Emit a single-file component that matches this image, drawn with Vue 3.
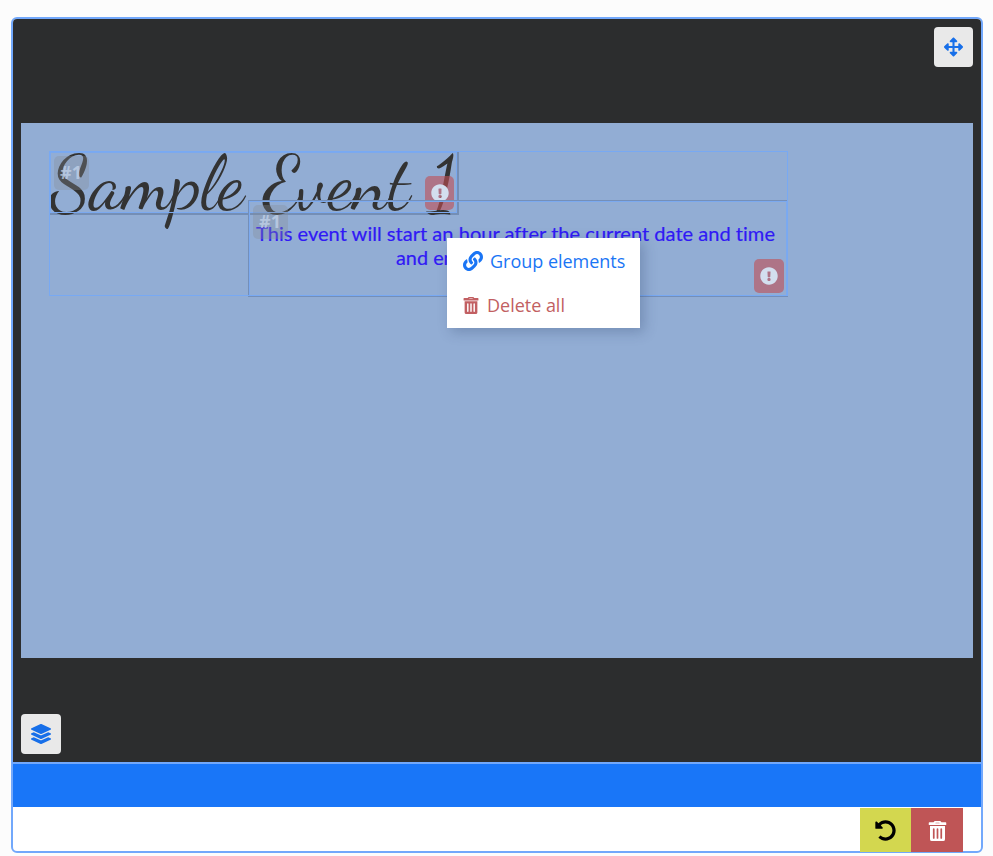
<script setup>
const icons = {
  move: { w: 512, d: 'M352.201 425.775l-79.196 79.196c-9.373 9.373-24.568 9.373-33.941 0l-79.196-79.196c-15.119-15.119-4.411-40.971 16.971-40.97h51.162L228 284H127.196v51.162c0 21.382-25.851 32.09-40.971 16.971L7.029 272.937c-9.373-9.373-9.373-24.569 0-33.941L86.225 159.8c15.119-15.119 40.971-4.411 40.971 16.971V228H228V127.196h-51.23c-21.382 0-32.09-25.851-16.971-40.971l79.196-79.196c9.373-9.373 24.568-9.373 33.941 0l79.196 79.196c15.119 15.119 4.411 40.971-16.971 40.971h-51.162V228h100.804v-51.162c0-21.382 25.851-32.09 40.97-16.971l79.196 79.196c9.373 9.373 9.373 24.569 0 33.941L425.773 352.2c-15.119 15.119-40.971 4.411-40.97-16.971V284H284v100.804h51.23c21.382 0 32.09 25.851 16.971 40.971z' },
  layers: { w: 512, d: 'M12.41 148.02l232.94 105.67c6.8 3.09 14.49 3.09 21.29 0l232.94-105.67c16.55-7.51 16.55-32.52 0-40.03L266.65 2.31a25.607 25.607 0 0 0-21.29 0L12.41 107.98c-16.55 7.51-16.55 32.53 0 40.04zm487.18 88.28l-58.09-26.33-161.64 73.27c-7.56 3.43-15.59 5.17-23.86 5.17s-16.29-1.74-23.86-5.17L70.51 209.97l-58.1 26.33c-16.55 7.5-16.55 32.5 0 40l232.94 105.59c6.8 3.08 14.49 3.08 21.29 0L499.59 276.3c16.55-7.5 16.55-32.5 0-40zm0 127.8l-57.87-26.23-161.86 73.37c-7.56 3.43-15.59 5.17-23.86 5.17s-16.29-1.74-23.86-5.17L70.29 337.87 12.41 364.1c-16.55 7.5-16.55 32.5 0 40l232.94 105.59c6.8 3.08 14.49 3.08 21.29 0L499.59 404.1c16.55-7.5 16.55-32.5 0-40z' },
  link: { w: 512, d: 'M326.612 185.391c59.747 59.809 58.927 155.698.36 214.59-.11.12-.24.25-.36.37l-67.2 67.2c-59.27 59.27-155.699 59.262-214.96 0-59.27-59.26-59.27-155.7 0-214.96l37.106-37.106c9.84-9.84 26.786-3.3 27.294 10.606.648 17.722 3.826 35.527 9.69 52.721 1.986 5.822.567 12.262-3.783 16.612l-13.087 13.087c-28.026 28.026-28.905 73.66-1.155 101.96 28.024 28.579 74.086 28.749 102.325.51l67.2-67.19c28.191-28.191 28.073-73.757 0-101.83-3.701-3.694-7.429-6.564-10.341-8.569a16.037 16.037 0 0 1-6.947-12.606c-.396-10.567 3.348-21.456 11.698-29.806l21.054-21.055c5.521-5.521 14.182-6.199 20.584-1.731a152.482 152.482 0 0 1 20.522 17.197zM467.547 44.449c-59.261-59.262-155.69-59.27-214.96 0l-67.2 67.2c-.12.12-.25.25-.36.37-58.566 58.892-59.387 154.781.36 214.59a152.454 152.454 0 0 0 20.521 17.196c6.402 4.468 15.064 3.789 20.584-1.731l21.054-21.055c8.35-8.35 12.094-19.239 11.698-29.806a16.037 16.037 0 0 0-6.947-12.606c-2.912-2.005-6.64-4.875-10.341-8.569-28.073-28.073-28.191-73.639 0-101.83l67.2-67.19c28.239-28.239 74.3-28.069 102.325.51 27.75 28.3 26.872 73.934-1.155 101.96l-13.087 13.087c-4.35 4.35-5.769 10.79-3.783 16.612 5.864 17.194 9.042 34.999 9.69 52.721.509 13.906 17.454 20.446 27.294 10.606l37.106-37.106c59.271-59.259 59.271-155.699.001-214.959z' },
  trash: { w: 448, d: 'M32 464a48 48 0 0 0 48 48h288a48 48 0 0 0 48-48V128H32zm266-256a22 22 0 0 1 44 0v224a22 22 0 0 1-44 0zm-96 0a22 22 0 0 1 44 0v224a22 22 0 0 1-44 0zm-96 0a22 22 0 0 1 44 0v224a22 22 0 0 1-44 0zM432 32H324l-13-18.7A28 28 0 0 0 289 0H159a28 28 0 0 0-22 13.3L124 32H16A16 16 0 0 0 0 48v40a16 16 0 0 0 16 16h416a16 16 0 0 0 16-16V48a16 16 0 0 0-16-16zM168 58l10-16h92l10 16z' },
  undo: { w: 512, d: 'M255.545 8c-66.269.119-126.438 26.233-170.86 68.685L48.971 40.971C33.851 25.851 8 36.559 8 57.941V192c0 13.255 10.745 24 24 24h134.059c21.382 0 32.09-25.851 16.971-40.971l-41.75-41.75c30.864-28.899 70.801-44.907 113.23-45.273 92.398-.798 170.283 73.977 169.484 169.442C423.236 348.009 349.816 424 256 424c-41.127 0-79.997-14.678-110.63-41.556-4.743-4.161-11.906-3.908-16.368.553L89.34 422.659c-4.872 4.872-4.631 12.815.482 17.433C133.798 479.813 192.074 504 256 504c136.966 0 247.999-111.033 248-247.998C504.001 119.193 392.354 7.755 255.545 8z' },
  alert: { w: 512, d: 'M504 256c0 136.997-111.043 248-248 248S8 392.997 8 256C8 119.083 119.043 8 256 8s248 111.083 248 248zm-248 50c-25.405 0-46 20.595-46 46s20.595 46 46 46 46-20.595 46-46-20.595-46-46-46zm-43.673-165.346l7.418 136c.347 6.364 5.609 11.346 11.982 11.346h48.546c6.373 0 11.635-4.982 11.982-11.346l7.418-136c.375-6.874-5.098-12.654-11.982-12.654h-63.383c-6.884 0-12.356 5.78-11.981 12.654z' }
}
const box = (name) => `0 0 ${icons[name].w} 512`
</script>

<template>
  <main class="page">
    <section class="editor">
      <div class="viewer">
        <div class="tools top">
          <button class="tool" aria-label="Move"><svg class="i20" :viewBox="box('move')"><path :d="icons.move.d" /></svg></button>
        </div>
        <div class="canvas">
          <div class="element title">
            <svg class="heading" viewBox="0 0 410 90"><text x="1" y="57" textLength="407" lengthAdjust="spacingAndGlyphs">Sample Event 1</text></svg>
            <div class="outline"></div>
            <span class="tag">#1</span>
            <span class="warn"><svg class="i17" :viewBox="box('alert')"><path :d="icons.alert.d" /></svg></span>
          </div>
          <div class="element description">
            <svg class="copy" viewBox="0 0 540 97">
              <text x="8" y="41" textLength="519" lengthAdjust="spacingAndGlyphs">This event will start an hour after the current date and time</text>
              <text x="148" y="65" textLength="232" lengthAdjust="spacingAndGlyphs">and end an hour after that.</text>
            </svg>
            <div class="outline"></div>
            <span class="tag">#1</span>
            <span class="warn"><svg class="i17" :viewBox="box('alert')"><path :d="icons.alert.d" /></svg></span>
          </div>
          <div class="group"></div>
          <div class="menu">
            <div class="item link"><svg class="i19" :viewBox="box('link')"><path :d="icons.link.d" /></svg><span class="label">Group elements</span></div>
            <div class="item danger"><svg class="bin" :viewBox="box('trash')"><path :d="icons.trash.d" /></svg><span class="label">Delete all</span></div>
          </div>
        </div>
        <div class="tools bottom">
          <button class="tool wide" aria-label="Layers"><svg class="i20" :viewBox="box('layers')"><path :d="icons.layers.d" /></svg></button>
        </div>
      </div>
      <div class="timeline"></div>
      <div class="actions">
        <button class="action undo" aria-label="Undo"><svg class="i21" :viewBox="box('undo')"><path :d="icons.undo.d" /></svg></button>
        <button class="action delete" aria-label="Delete"><svg class="i20" :viewBox="box('trash')"><path :d="icons.trash.d" /></svg></button>
      </div>
    </section>
  </main>
</template>

<style>
body { background: #fcfcfc; }
</style>

<style scoped>
* { box-sizing: border-box; }
.page { height: 856px; padding: 17px 10px 3px 11px; font-family: "Open Sans", "Noto Sans", sans-serif; }
svg { display: block; fill: currentColor; flex: none; }
button { border: 0; margin: 0; padding: 0; display: flex; align-items: center; justify-content: center; font: inherit; }
.editor { height: 836px; border: 2px solid #72a8fb; border-radius: 6px; background: #fff; display: flex; flex-direction: column; }
.viewer { height: 743px; flex: none; padding: 8px; background: #2c2d2e; border-radius: 4px 4px 0 0; display: flex; flex-direction: column; }
.tools { display: flex; flex: 1; }
.tools.top { flex: 0 0 96px; justify-content: flex-end; align-items: flex-start; }
.tools.bottom { align-items: flex-end; }
.tool { width: 39px; height: 40px; border-radius: 4px; background: #e9e9e9; color: #176fe9; }
.tool.wide { width: 40px; }
.tool.wide svg { width: 20px; }
.i17 { width: 18px; height: 18px; }
.i19 { width: 20px; height: 20px; }
.i20 { width: 19px; height: 20px; }
.i21 { width: 21px; height: 21px; }
.canvas { position: relative; height: 535px; flex: none; background: #92add4; }
.group { position: absolute; left: 28px; top: 28px; width: 739px; height: 145px; border: 1px solid #78a9f3; }
.element { position: absolute; border: 1px solid #748fb9; }
.title { left: 28px; top: 28px; width: 410px; height: 64px; border-bottom-width: 2px; border-right-width: 2px; border-color: #748eb5; }
.description { left: 227px; top: 77px; width: 540px; height: 97px; }
.outline { position: absolute; inset: 0; border: 1px solid #7ba9ef; }
.heading { position: absolute; left: -1px; top: -1px; width: 410px; height: 90px; overflow: visible; fill: #333; font: 75px "Dancing Script", "Liberation Serif", serif; }
.copy { position: absolute; left: -1px; top: -1px; width: 540px; height: 97px; fill: #3019f5; stroke: #3019f5; stroke-width: .2px; font: 19px Lato, sans-serif; font-variant-ligatures: none; }
.tag { position: absolute; left: 4px; top: 4px; width: 35px; height: 34px; border-radius: 5px; background: rgba(135, 140, 148, .33); color: rgba(195, 211, 234, .75); font-size: 18px; font-weight: 700; line-height: 33px; padding-left: 6px; }
.warn { position: absolute; right: 3px; bottom: 3px; width: 30px; height: 34px; border-radius: 5px; background: rgba(194, 78, 84, .6); color: #d3dfef; display: flex; align-items: center; justify-content: center; }
.title .warn { width: 29px; }
.menu { position: absolute; left: 426px; top: 115px; width: 193px; height: 90px; padding: 1px 0; background: #fff; box-shadow: 4px 4px 12px rgba(40, 60, 100, .28); }
.item { height: 44px; padding-left: 16px; display: flex; align-items: center; font-size: 18px; }
.link { color: #1a75f5; gap: 7px; }
.danger { color: #c25f62; gap: 8px; }
.bin { width: 16px; height: 17px; }
.label { white-space: nowrap; font-weight: 380; letter-spacing: -.02px; }
.timeline { height: 45px; flex: none; border-top: 2px solid #72a8fb; background: #1976f8; }
.actions { display: flex; justify-content: flex-end; padding: 1px 18px 0 0; height: 44px; flex: none; }
.action { height: 44px; position: relative; }
.undo { width: 51px; background: #d3d74f; color: #000; }
.delete { width: 52px; background: #bf5556; color: #fff; }
.undo svg, .delete svg { margin-top: 1px; }
</style>
